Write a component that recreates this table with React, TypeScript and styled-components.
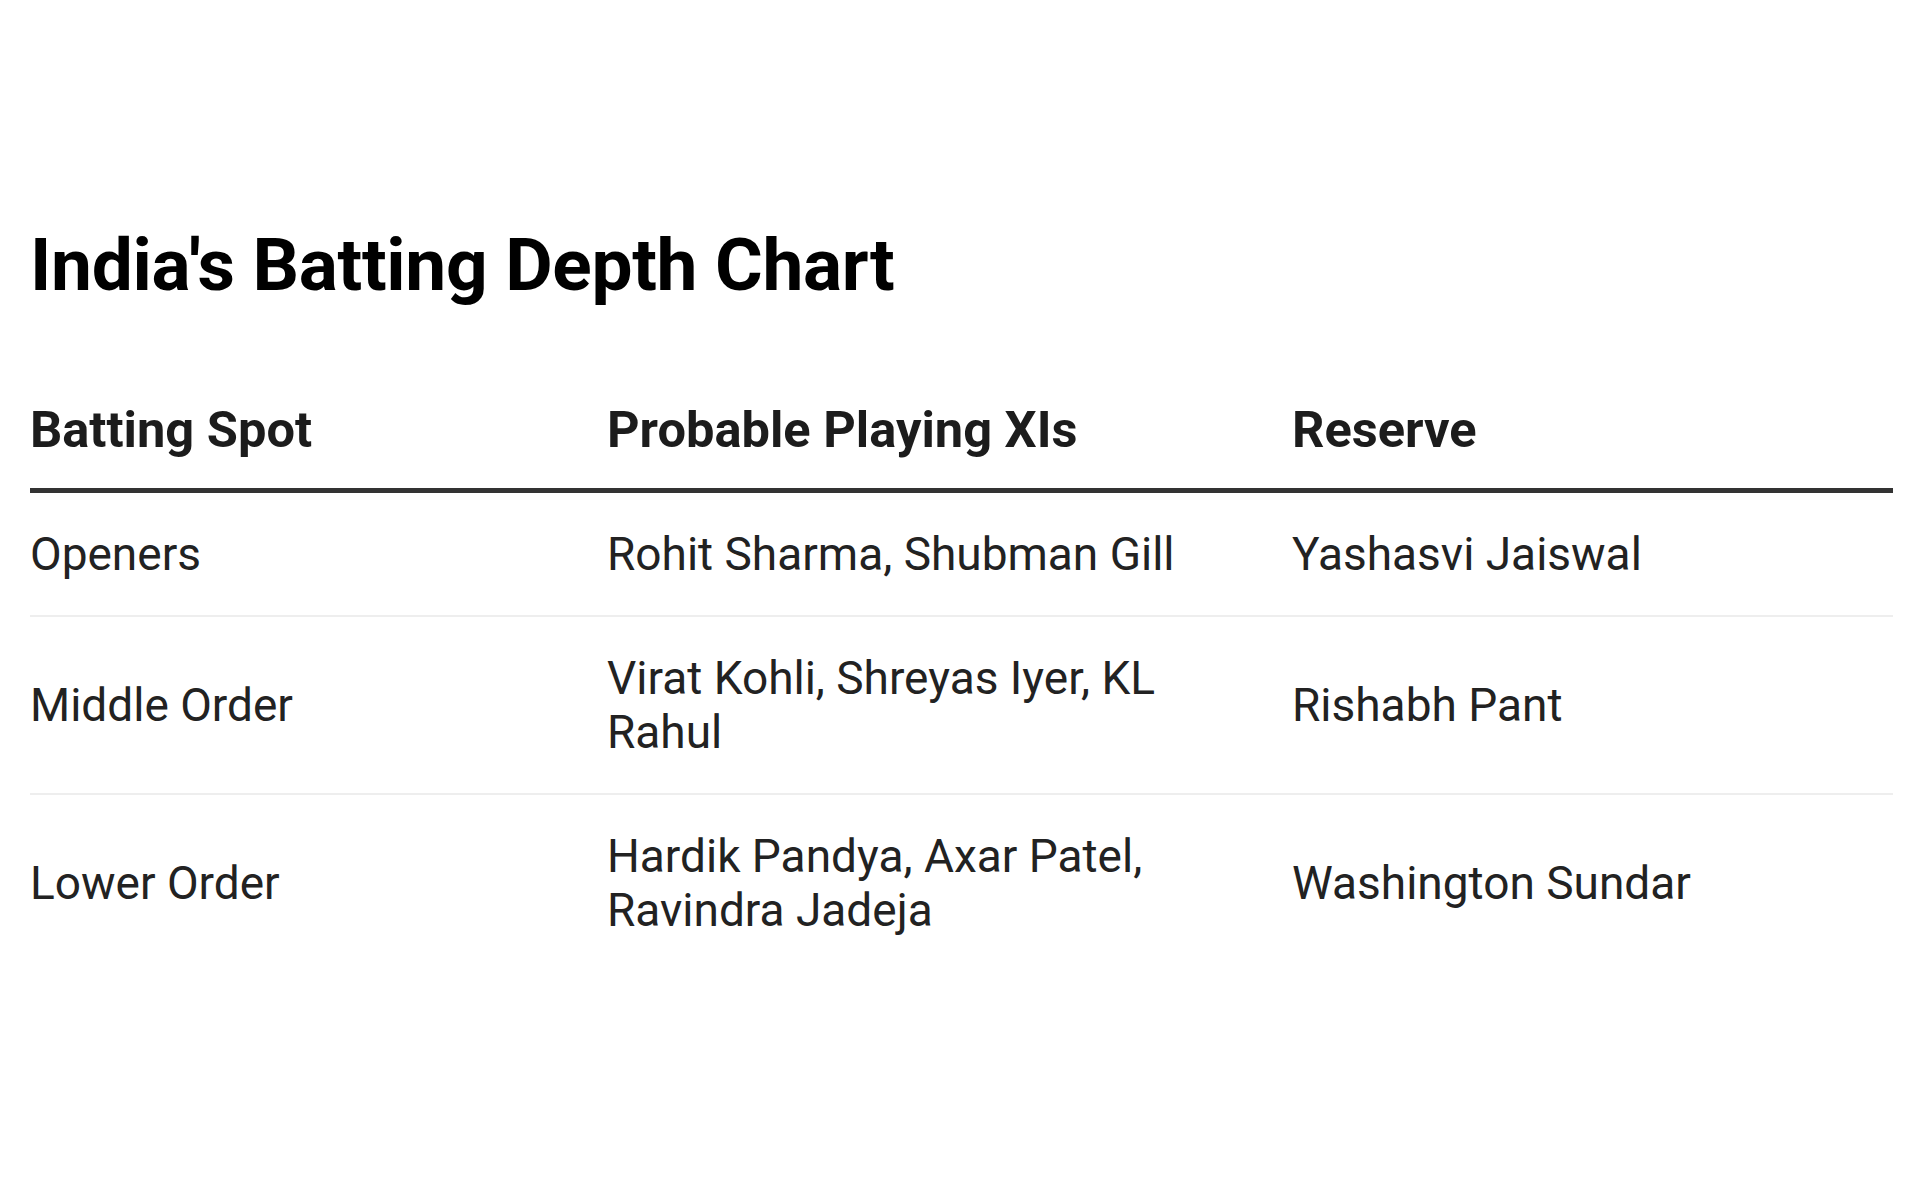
import React from "react";
import styled, { createGlobalStyle } from "styled-components";

const Global = createGlobalStyle`
  html, body { margin: 0; padding: 0; background: #fff; }
  body { font-family: Roboto, "Liberation Sans", Arial, sans-serif; }
`;

const Page = styled.main`
  padding: 222px 27px 0 30px;
`;

const Title = styled.h2`
  margin: 0 0 90px;
  font-size: 73px;
  line-height: 1.2;
  font-weight: 700;
  color: #000;
  letter-spacing: -0.3px;
`;

const Table = styled.table`
  width: 100%;
  border-collapse: collapse;
  table-layout: fixed;
`;

const HeadCell = styled.th`
  text-align: left;
  font-size: 50.6px;
  font-weight: 700;
  line-height: 1.2;
  color: #1c1c1c;
  padding: 0 40px 28px 0;
  border-bottom: 5px solid #333;
`;

const Row = styled.tr<{ $last?: boolean }>`
  border-bottom: ${(p) => (p.$last ? "none" : "2px solid #eee")};
`;

const Cell = styled.td`
  font-size: 46px;
  line-height: 54px;
  color: #222;
  padding: 34px 40px 34px 0;
  vertical-align: middle;
`;

const rows = [
  ["Openers", "Rohit Sharma, Shubman Gill", "Yashasvi Jaiswal"],
  ["Middle Order", "Virat Kohli, Shreyas Iyer, KL Rahul", "Rishabh Pant"],
  ["Lower Order", "Hardik Pandya, Axar Patel, Ravindra Jadeja", "Washington Sundar"],
];

export default function App() {
  return (
    <>
      <Global />
      <Page>
        <Title>India's Batting Depth Chart</Title>
        <Table>
          <colgroup>
            <col style={{ width: 577 }} />
            <col style={{ width: 685 }} />
            <col />
          </colgroup>
          <thead>
            <tr>
              <HeadCell>Batting Spot</HeadCell>
              <HeadCell>Probable Playing XIs</HeadCell>
              <HeadCell>Reserve</HeadCell>
            </tr>
          </thead>
          <tbody>
            {rows.map((r, i) => (
              <Row key={r[0]} $last={i === rows.length - 1}>
                {r.map((c) => (
                  <Cell key={c}>{c}</Cell>
                ))}
              </Row>
            ))}
          </tbody>
        </Table>
      </Page>
    </>
  );
}
